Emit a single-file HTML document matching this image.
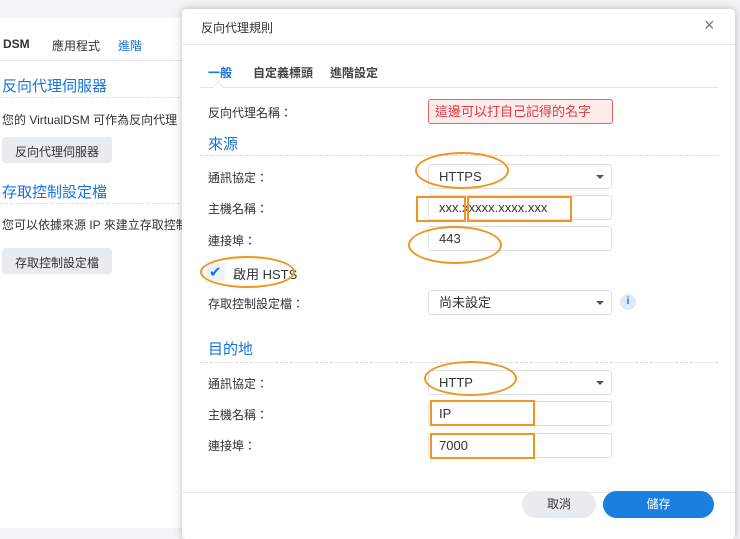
<!DOCTYPE html><html><head><meta charset="utf-8"><style>
*{margin:0;padding:0;box-sizing:border-box}
body{width:740px;height:525px;overflow:hidden;background:#f3f4f5;font-family:"Liberation Sans","Noto Sans CJK TC",sans-serif;color:#333;position:relative}
.a{position:absolute;white-space:nowrap}
.bl{color:#1673d9}
.box{position:absolute;left:428px;width:184px;height:25px;border:1px solid #dde1e5;border-radius:3px;background:#fff;font-size:13px;padding:3px 10px;line-height:17px;color:#333}
.car{position:absolute;right:7px;top:10px;width:0;height:0;border-left:4px solid transparent;border-right:4px solid transparent;border-top:4px solid #555}
.lbl{position:absolute;left:208px;font-size:12px;color:#333}
.o{position:absolute;border:2px solid #f0961e}
.dot{position:absolute;left:200px;width:518px;border-top:1px dashed #d6d9dc}
</style></head><body>
<div class="a" style="left:0;top:18px;width:190px;height:510px;background:#fff"></div>
<div class="a" style="left:0;top:60px;width:190px;border-top:1px solid #e3e6e9"></div>
<div class="a" style="left:3px;top:37px;font-size:12px;font-weight:bold">DSM</div>
<div class="a" style="left:52px;top:37px;font-size:12px">應用程式</div>
<div class="a bl" style="left:118px;top:37px;font-size:12px">進階</div>
<div class="a bl" style="left:2px;top:75px;font-size:15px">反向代理伺服器</div>
<div class="a" style="left:0;top:97px;width:190px;border-top:1px dashed #ddd"></div>
<div class="a" style="left:2px;top:111px;font-size:12px">您的 VirtualDSM 可作為反向代理</div>
<div class="a" style="left:2px;top:137px;width:110px;height:26px;background:#e9ecef;border-radius:3px;font-size:12px;padding:6px 0 0 13px">反向代理伺服器</div>
<div class="a bl" style="left:2px;top:181px;font-size:15px">存取控制設定檔</div>
<div class="a" style="left:0;top:203px;width:190px;border-top:1px dashed #ddd"></div>
<div class="a" style="left:2px;top:216px;font-size:12px">您可以依據來源 IP 來建立存取控制</div>
<div class="a" style="left:2px;top:248px;width:110px;height:26px;background:#e9ecef;border-radius:3px;font-size:12px;padding:6px 0 0 13px">存取控制設定檔</div>

<div class="a" style="left:182px;top:9px;width:553px;height:530px;background:#fff;border-radius:4px;box-shadow:0 0 8px rgba(0,0,0,.25)"></div>
<div class="a" style="left:201px;top:19px;font-size:12px">反向代理規則</div>
<div class="a" style="left:704px;top:15px;font-size:18px;color:#777">×</div>
<div class="a" style="left:182px;top:44px;width:553px;border-top:1px solid #e6e8ea"></div>
<div class="a bl" style="left:208px;top:64px;font-size:12px;font-weight:bold">一般</div>
<div class="a" style="left:253px;top:64px;font-size:12px;font-weight:bold;color:#444">自定義標頭</div>
<div class="a" style="left:330px;top:64px;font-size:12px;font-weight:bold;color:#444">進階設定</div>
<div class="a" style="left:200px;top:87px;width:518px;border-top:1px solid #e3e6e9"></div>
<div class="a" style="left:214px;top:83px;width:8px;height:8px;background:#fff;border-left:1px solid #e3e6e9;border-top:1px solid #e3e6e9;transform:rotate(45deg)"></div>
<div class="lbl" style="top:104px">反向代理名稱：</div>
<div class="a" style="left:428px;top:99px;width:185px;height:25px;border:1px solid #e06a6a;border-radius:3px;background:#fdecec;color:#e0393e;font-size:13px;padding:2px 6px;line-height:19px">這邊可以打自己記得的名字</div>
<div class="a bl" style="left:208px;top:133px;font-size:15px">來源</div>
<div class="dot" style="top:155px"></div>
<div class="lbl" style="top:169px">通訊協定：</div>
<div class="box" style="top:164px">HTTPS<div class="car"></div></div>
<div class="lbl" style="top:200px">主機名稱：</div>
<div class="box" style="top:195px">xxx.xxxxx.xxxx.xxx</div>
<div class="lbl" style="top:232px">連接埠：</div>
<div class="box" style="top:226px">443</div>
<div class="a" style="left:207px;top:263px;width:18px;height:18px;border-radius:3px;background:#eef3f9"></div>
<div class="a" style="left:209px;top:263px;font-size:15px;color:#1673d9">✔</div>
<div class="a" style="left:233px;top:264px;font-size:13px">啟用 HSTS</div>
<div class="lbl" style="top:295px">存取控制設定檔：</div>
<div class="box" style="top:290px">尚未設定<div class="car"></div></div>
<div class="a" style="left:620px;top:294px;width:16px;height:16px;border-radius:50%;background:#dde9f7;color:#1673d9;font-size:10px;font-weight:bold;text-align:center;line-height:16px">i</div>
<div class="a bl" style="left:208px;top:338px;font-size:15px">目的地</div>
<div class="dot" style="top:362px"></div>
<div class="lbl" style="top:375px">通訊協定：</div>
<div class="box" style="top:370px">HTTP<div class="car"></div></div>
<div class="lbl" style="top:406px">主機名稱：</div>
<div class="box" style="top:401px">IP</div>
<div class="lbl" style="top:437px">連接埠：</div>
<div class="box" style="top:433px">7000</div>
<div class="a" style="left:182px;top:492px;width:553px;border-top:1px solid #e6e8ea"></div>
<div class="a" style="left:522px;top:491px;width:74px;height:27px;border-radius:14px;background:#e9ecef;font-size:12px;text-align:center;line-height:27px">取消</div>
<div class="a" style="left:603px;top:491px;width:111px;height:27px;border-radius:14px;background:#1a7fe0;color:#fff;font-size:12px;text-align:center;line-height:27px">儲存</div>

<div class="o" style="left:415px;top:152px;width:94px;height:37px;border-radius:50%"></div>
<div class="o" style="left:416px;top:196px;width:50px;height:26px"></div>
<div class="o" style="left:467px;top:196px;width:105px;height:26px"></div>
<div class="o" style="left:408px;top:226px;width:94px;height:38px;border-radius:50%"></div>
<div class="o" style="left:200px;top:256px;width:95px;height:32px;border-radius:50%"></div>
<div class="o" style="left:424px;top:361px;width:93px;height:35px;border-radius:50%"></div>
<div class="o" style="left:430px;top:400px;width:105px;height:26px"></div>
<div class="o" style="left:430px;top:433px;width:105px;height:26px"></div>
</body></html>
